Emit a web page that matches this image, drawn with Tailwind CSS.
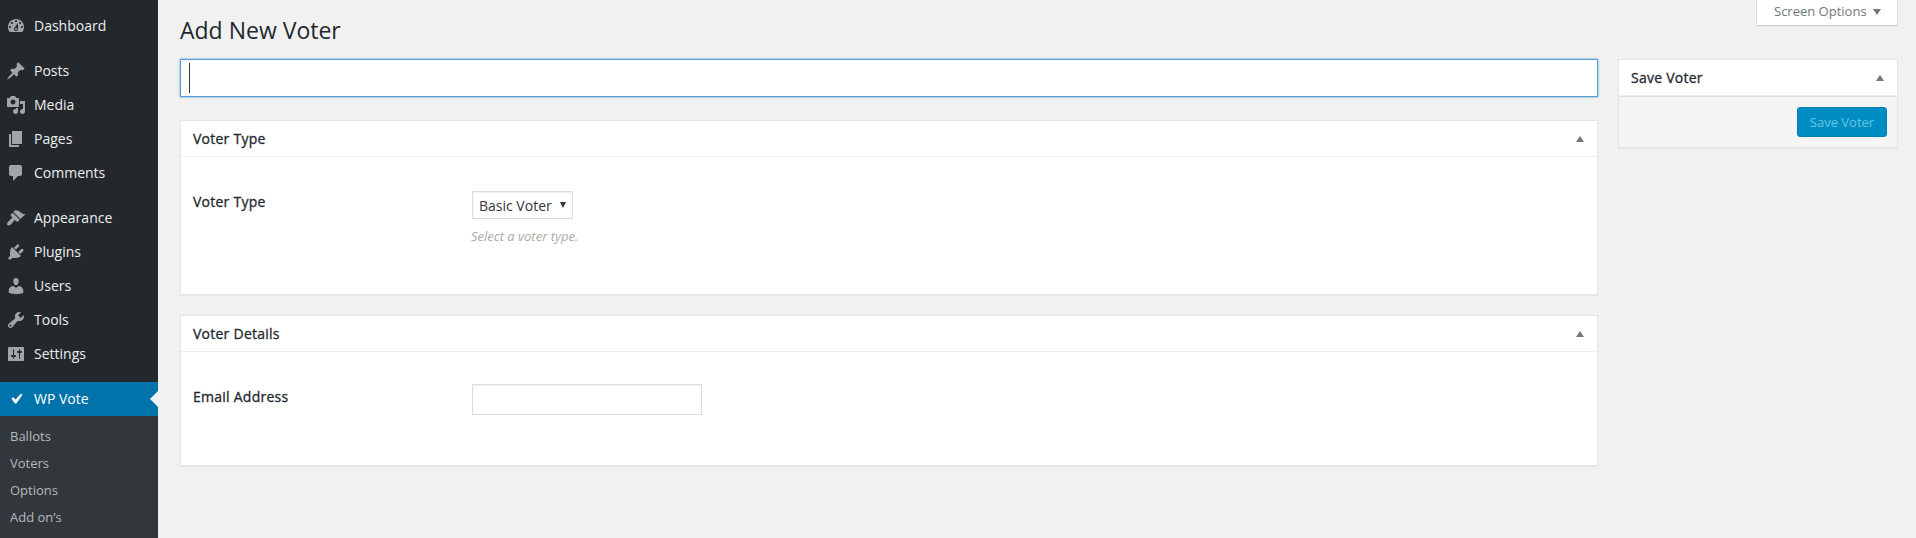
<!DOCTYPE html>
<html lang="en">
<head>
<meta charset="utf-8">
<title>Add New Voter</title>
<script src="https://cdn.jsdelivr.net/npm/@tailwindcss/browser@4"></script>
</head>
<body class="flex h-[538px] overflow-hidden bg-[#f1f1f1] font-['Open_Sans',sans-serif] text-[13px] text-[#444]">

<nav class="w-[158px] shrink-0 bg-[#23282d] pt-[9px] text-[14px] leading-[18px] text-[#eee]">
  <a class="flex h-[34px] items-center gap-2 pl-[6px]"><svg class="size-5 fill-[#a0a5aa]" viewBox="0 0 20 20"><path d="M3.76 16h12.48c1.1-1.37 1.76-3.11 1.76-5 0-4.42-3.58-8-8-8s-8 3.58-8 8c0 1.89.66 3.63 1.76 5zM10 4c.55 0 1 .45 1 1s-.45 1-1 1-1-.45-1-1 .45-1 1-1zM6 6c.55 0 1 .45 1 1s-.45 1-1 1-1-.45-1-1 .45-1 1-1zm8 0c.55 0 1 .45 1 1s-.45 1-1 1-1-.45-1-1 .45-1 1-1zm-5.37 5.55L12 7v6c0 1.1-.9 2-2 2s-2-.9-2-2c0-.57.24-1.08.63-1.45zM4 10c.55 0 1 .45 1 1s-.45 1-1 1-1-.45-1-1 .45-1 1-1zm12 0c.55 0 1 .45 1 1s-.45 1-1 1-1-.45-1-1 .45-1 1-1zm-5 3c0-.55-.45-1-1-1s-1 .45-1 1 .45 1 1 1 1-.45 1-1z"/></svg><span>Dashboard</span></a>
  <a class="mt-[11px] flex h-[34px] items-center gap-2 pl-[6px]"><svg class="size-5 fill-[#a0a5aa]" viewBox="0 0 20 20"><path d="M10.44 3.02l1.82-1.82 6.36 6.35-1.83 1.82c-1.05-.68-2.48-.57-3.41.36l-.75.75c-.92.93-1.04 2.35-.35 3.41l-1.83 1.82-2.41-2.41-2.8 2.79c-.42.42-3.38 2.71-3.8 2.29s1.86-3.39 2.28-3.81l2.79-2.79L4.1 9.36l1.83-1.82c1.05.69 2.48.57 3.4-.36l.75-.75c.93-.92 1.05-2.35.36-3.41z"/></svg><span>Posts</span></a>
  <a class="flex h-[34px] items-center gap-2 pl-[6px]"><svg class="size-5 fill-[#a0a5aa]" viewBox="0 0 20 20"><path d="M13 11V4c0-.55-.45-1-1-1h-1.67L9 1H5L3.67 3H2c-.55 0-1 .45-1 1v7c0 .55.45 1 1 1h10c.55 0 1-.45 1-1zM7 4.5c1.38 0 2.5 1.12 2.5 2.5S8.38 9.5 7 9.5 4.5 8.38 4.5 7 5.62 4.5 7 4.5zM14 6h5v10.5c0 1.38-1.12 2.5-2.5 2.5S14 17.88 14 16.5s1.12-2.5 2.5-2.5c.17 0 .34.02.5.05V9h-3V6zm-4 8.05V13h2v3.5c0 1.38-1.12 2.5-2.5 2.5S7 17.88 7 16.5 8.12 14 9.5 14c.17 0 .34.02.5.05z"/></svg><span>Media</span></a>
  <a class="flex h-[34px] items-center gap-2 pl-[6px]"><svg class="size-5 fill-[#a0a5aa]" viewBox="0 0 20 20"><path d="M6 15V2h10v13H6zm-1 1h8v2H3V5h2v11z"/></svg><span>Pages</span></a>
  <a class="flex h-[34px] items-center gap-2 pl-[6px]"><svg class="size-5 fill-[#a0a5aa]" viewBox="0 0 20 20"><path d="M5 2h9c1.1 0 2 .9 2 2v7c0 1.1-.9 2-2 2h-2l-5 5v-5H5c-1.1 0-2-.9-2-2V4c0-1.1.9-2 2-2z"/></svg><span>Comments</span></a>
  <a class="mt-[11px] flex h-[34px] items-center gap-2 pl-[6px]"><svg class="size-5 fill-[#a0a5aa]" viewBox="0 0 20 20"><path d="M14.48 11.06L7.41 3.99l1.5-1.5c.5-.56 2.3-.47 3.51.32 1.21.8 1.43 1.28 2.91 2.1 1.18.64 2.45 1.26 4.45.85zm-.71.71L6.7 4.7 4.93 6.47c-.39.39-.39 1.02 0 1.41l1.06 1.06c.39.39.39 1.03 0 1.42-.6.6-1.43 1.11-2.21 1.69-.35.26-.7.53-1.01.84C1.43 14.23.4 16.08 1.4 17.07c.99 1 2.84-.03 4.18-1.36.31-.31.58-.66.85-1.02.57-.78 1.08-1.61 1.69-2.21.39-.39 1.02-.39 1.41 0l1.06 1.06c.39.39 1.02.39 1.41 0z"/></svg><span>Appearance</span></a>
  <a class="flex h-[34px] items-center gap-2 pl-[6px]"><svg class="size-5 fill-[#a0a5aa]" viewBox="0 0 20 20"><path d="M13.11 4.36L9.87 7.6 8 5.73l3.24-3.24c.35-.34 1.05-.2 1.56.32.52.51.66 1.21.31 1.55zm-8 1.77l.91-1.12 9.01 9.01-1.19.84c-.71.71-2.63 1.16-3.82 1.16H6.14L4.9 17.26c-.59.59-1.54.59-2.12 0-.59-.58-.59-1.53 0-2.12l1.24-1.24v-3.88c0-1.13.4-3.19 1.09-3.89zm7.26 3.97l3.24-3.24c.34-.35 1.04-.21 1.55.31.52.51.66 1.21.31 1.55l-3.24 3.25z"/></svg><span>Plugins</span></a>
  <a class="flex h-[34px] items-center gap-2 pl-[6px]"><svg class="size-5 fill-[#a0a5aa]" viewBox="0 0 20 20"><path d="M10 9.25c-2.27 0-2.73-3.44-2.73-3.44C7 4.02 7.82 2 9.97 2c2.16 0 2.98 2.02 2.71 3.81 0 0-.41 3.44-2.68 3.44zm0 2.57L12.72 10c2.39 0 4.52 2.33 4.52 4.53v2.49s-3.65 1.13-7.24 1.13c-3.65 0-7.24-1.13-7.24-1.13v-2.49c0-2.25 1.94-4.48 4.47-4.48z"/></svg><span>Users</span></a>
  <a class="flex h-[34px] items-center gap-2 pl-[6px]"><svg class="size-5 fill-[#a0a5aa]" viewBox="0 0 20 20"><path d="M16.68 9.77c-1.34 1.34-3.3 1.67-4.95.99l-5.41 6.52c-.99.99-2.59.99-3.58 0s-.99-2.59 0-3.57l6.52-5.42c-.68-1.65-.35-3.61.99-4.95 1.28-1.28 3.12-1.62 4.72-1.06l-2.89 2.89 2.82 2.82 2.86-2.87c.53 1.58.18 3.39-1.08 4.65zM3.81 16.21c.4.39 1.04.39 1.43 0 .4-.4.4-1.04 0-1.43-.39-.4-1.03-.4-1.43 0-.39.39-.39 1.03 0 1.43z"/></svg><span>Tools</span></a>
  <a class="flex h-[34px] items-center gap-2 pl-[6px]"><svg class="size-5 fill-[#a0a5aa]" viewBox="0 0 20 20"><path d="M18 16V4c0-.55-.45-1-1-1H3c-.55 0-1 .45-1 1v12c0 .55.45 1 1 1h14c.55 0 1-.45 1-1zM8 11h1c.55 0 1 .45 1 1s-.45 1-1 1H8v1.5c0 .28-.22.5-.5.5s-.5-.22-.5-.5V13H6c-.55 0-1-.45-1-1s.45-1 1-1h1V5.5c0-.28.22-.5.5-.5s.5.22.5.5V11zm5-2h-1c-.55 0-1-.45-1-1s.45-1 1-1h1V5.5c0-.28.22-.5.5-.5s.5.22.5.5V7h1c.55 0 1 .45 1 1s-.45 1-1 1h-1v5.5c0 .28-.22.5-.5.5s-.5-.22-.5-.5V9z"/></svg><span>Settings</span></a>
  <a class="mt-[11px] flex h-[34px] items-center gap-2 bg-[#0073aa] pl-[6px] text-white"><svg class="size-5 fill-white" viewBox="0 0 20 20"><path d="M14.83 4.89l1.34.94-5.81 8.38H9.02L5.78 9.67l1.34-1.25 2.57 2.4z" stroke="#fff" stroke-width=".5"/></svg><span class="flex-1">WP Vote</span><svg class="h-4 w-2 fill-[#f1f1f1]" viewBox="0 0 8 16"><path d="M8 0v16L0 8z"/></svg></a>
  <div class="flex h-[122px] flex-col bg-[#32373c] pt-[7px] pl-[10px] text-[13px] leading-[27px] text-[#b4b9be]">
    <a>Ballots</a><a>Voters</a><a>Options</a><a>Add on’s</a>
  </div>
</nav>

<main class="flex flex-1 flex-col pr-[18px] pl-[22px]">
  <header class="flex h-[59px] items-start justify-between">
    <h1 class="pt-[15px] text-[23px] leading-[30px] font-normal text-[#23282d]">Add New Voter</h1>
    <button class="flex h-[26px] w-[142px] items-center gap-[6px] border border-t-0 border-[#ddd] border-b-[#ccc] bg-white pb-[2px] pl-[17px] text-[13px] text-[#72777c] shadow-[0_1px_1px_-1px_rgba(0,0,0,0.1)]"><span>Screen Options</span><svg class="h-[6px] w-2 fill-[#72777c]" viewBox="0 0 8 6"><path d="M0 0h8L4 6z"/></svg></button>
  </header>
  <div class="flex items-start gap-5">
    <div class="flex flex-1 flex-col">
      <div class="flex h-[38px] items-center border border-[#5b9dd9] bg-white pl-2 shadow-[0_0_2px_rgba(30,140,190,0.8)]"><i class="h-[30px] w-px bg-[#32373c]"></i></div>

      <section class="mt-[23px] h-[175px] border border-[#e5e5e5] bg-white shadow-[0_1px_1px_rgba(0,0,0,0.04)]">
        <h2 class="flex h-[36px] items-center justify-between border-b border-[#eee] pr-[13px] pl-3 text-[14px] tracking-[0.25px] text-[#23282d]"><span class="[-webkit-text-stroke:0.3px_#23282d]">Voter Type</span><svg class="h-[6px] w-2 fill-[#72777c]" viewBox="0 0 8 6"><path d="M4 0l4 6H0z"/></svg></h2>
        <div class="flex pt-[34px] pl-3">
          <div class="w-[279px] pt-[1px] text-[14px] leading-5 tracking-[0.25px] text-[#23282d] [-webkit-text-stroke:0.3px_#23282d]">Voter Type</div>
          <div class="flex flex-col items-start">
            <div class="flex h-[28px] w-[101px] items-center justify-between border border-[#ddd] bg-white pr-[6px] pl-[6px] text-[14px] text-[#32373c] shadow-[inset_0_1px_2px_rgba(0,0,0,0.07)]"><span>Basic Voter</span><svg class="h-[6px] w-[6px] fill-[#32373c]" viewBox="0 0 6 6"><path d="M0 0h6L3 6z"/></svg></div>
            <p class="-ml-px mt-[8px] text-[13px] leading-[18px] text-[#aaa] italic">Select a voter type.</p>
          </div>
        </div>
      </section>

      <section class="mt-5 h-[151px] border border-[#e5e5e5] bg-white shadow-[0_1px_1px_rgba(0,0,0,0.04)]">
        <h2 class="flex h-[36px] items-center justify-between border-b border-[#eee] pr-[13px] pl-3 text-[14px] tracking-[0.25px] text-[#23282d]"><span class="[-webkit-text-stroke:0.3px_#23282d]">Voter Details</span><svg class="h-[6px] w-2 fill-[#72777c]" viewBox="0 0 8 6"><path d="M4 0l4 6H0z"/></svg></h2>
        <div class="flex pt-8 pl-3">
          <div class="w-[279px] pt-[3px] text-[14px] leading-5 tracking-[0.25px] text-[#23282d] [-webkit-text-stroke:0.3px_#23282d]">Email Address</div>
          <div class="h-[31px] w-[230px] border border-[#ddd] bg-white shadow-[inset_0_1px_2px_rgba(0,0,0,0.07)]"></div>
        </div>
      </section>
    </div>

    <section class="w-[280px] border border-[#e5e5e5] bg-[#f5f5f5] shadow-[0_1px_1px_rgba(0,0,0,0.04)]">
      <h2 class="flex h-[36px] items-center justify-between border-b border-[#eee] bg-white pr-[13px] pl-3 text-[14px] tracking-[0.25px] text-[#23282d]"><span class="[-webkit-text-stroke:0.3px_#23282d]">Save Voter</span><svg class="h-[6px] w-2 fill-[#72777c]" viewBox="0 0 8 6"><path d="M4 0l4 6H0z"/></svg></h2>
      <div class="flex h-[51px] items-start justify-end border-t border-[#ddd] pt-[10px] pr-[10px]">
        <button class="h-[30px] w-[90px] rounded-[3px] border border-[#007cb2] bg-[#008ec2] pt-px text-[13px] text-[#66c6e4]">Save Voter</button>
      </div>
    </section>
  </div>
</main>
</body>
</html>
